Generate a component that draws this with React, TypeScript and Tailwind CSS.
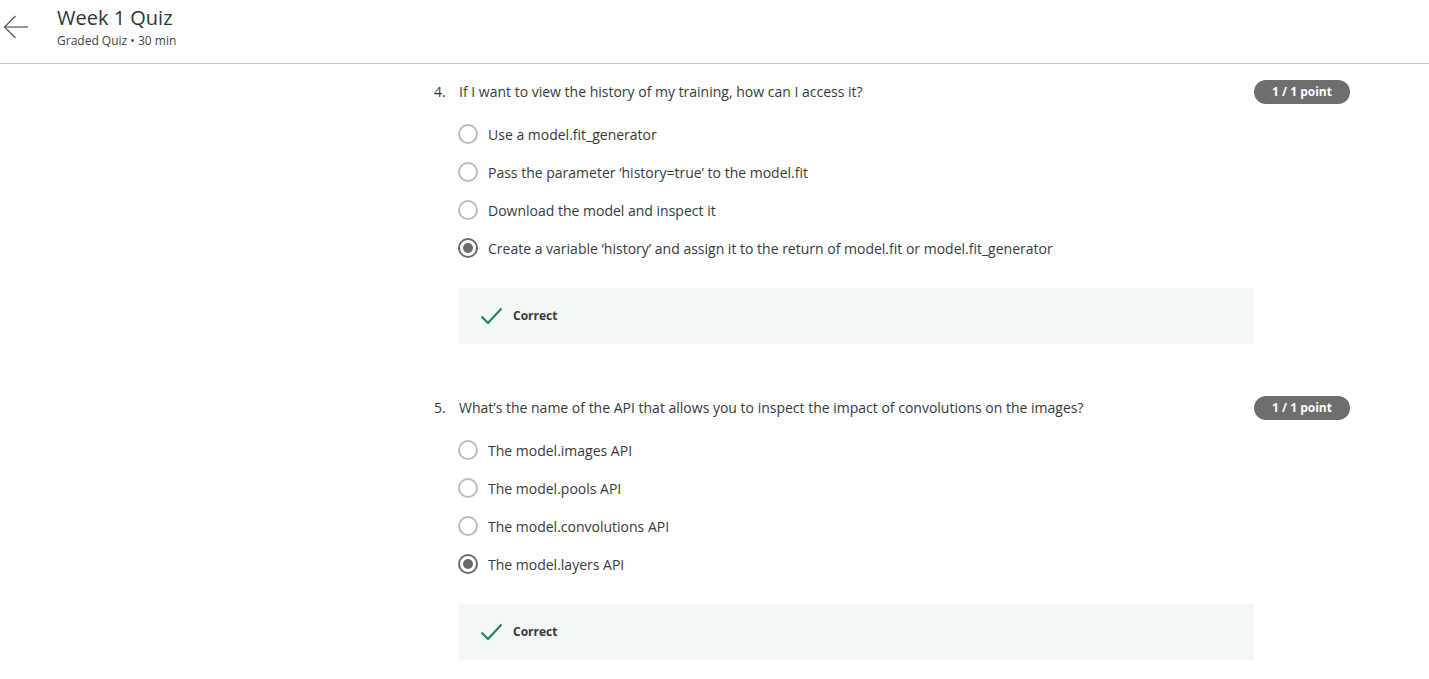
type Question = {
  num: number;
  text: string;
  options: string[];
  selected: number;
};

const questions: Question[] = [
  {
    num: 4,
    text: 'If I want to view the history of my training, how can I access it?',
    options: [
      'Use a model.fit_generator',
      'Pass the parameter \u2018history=true\u2019 to the model.fit',
      'Download the model and inspect it',
      'Create a variable \u2018history\u2019 and assign it to the return of model.fit or model.fit_generator',
    ],
    selected: 3,
  },
  {
    num: 5,
    text: 'What\u2019s the name of the API that allows you to inspect the impact of convolutions on the images?',
    options: [
      'The model.images API',
      'The model.pools API',
      'The model.convolutions API',
      'The model.layers API',
    ],
    selected: 3,
  },
];

function Radio({ checked }: { checked: boolean }) {
  return (
    <span
      className={`flex h-[20px] w-[20px] shrink-0 items-center justify-center rounded-full border-2 ${
        checked ? 'border-[#6b6b6b]' : 'border-[#bdbdbd]'
      }`}
    >
      {checked && <span className="h-[10px] w-[10px] rounded-full bg-[#6b6b6b]" />}
    </span>
  );
}

function QuestionBlock({ q }: { q: Question }) {
  return (
    <div className="flex">
      <div className="flex-1">
        <div className="flex h-[24px] items-center text-[14px] text-[#373a3c]">
          <span className="w-[25px]">{q.num}.</span>
          <span>{q.text}</span>
        </div>
        <div className="ml-[24px] mt-[12px] flex flex-col">
          {q.options.map((opt, i) => (
            <label key={opt} className="flex h-[38px] items-center gap-[10px] text-[14px] text-[#373a3c]">
              <Radio checked={i === q.selected} />
              <span>{opt}</span>
            </label>
          ))}
        </div>
        <div className="ml-[25px] mt-[21px] flex h-[56px] items-center bg-[#f3f8f6] pl-[21px]">
          <svg width="23" height="18" viewBox="0 0 23 18" fill="none">
            <path d="M1.5 9.5 L8 16 L21.5 1.5" stroke="#1f8354" strokeWidth="2" />
          </svg>
          <span className="ml-[10px] text-[12px] font-bold text-[#373a3c]">Correct</span>
        </div>
      </div>
      <div className="w-[96px] pt-[1px]">
        <span className="flex h-[24px] items-center justify-center rounded-full bg-[#6e6e6e] text-[12px] font-bold text-white">
          1 / 1 point
        </span>
      </div>
    </div>
  );
}

export default function App() {
  return (
    <div className="min-h-screen bg-white" style={{ fontFamily: '"Open Sans", "Liberation Sans", sans-serif' }}>
      <header className="flex h-[64px] items-start border-b border-[#c8c8c8]">
        <button className="ml-[3px] mt-[14px]">
          <svg width="26" height="26" viewBox="0 0 26 26" fill="none" stroke="#555" strokeWidth="1.2">
            <path d="M1.5 13 H25" />
            <path d="M12.5 2 L1.5 13 L12.5 24" />
          </svg>
        </button>
        <div className="ml-[28px] mt-[5px]">
          <h1 className="text-[20px] leading-[26px] text-[#333]">Week 1 Quiz</h1>
          <p className="mt-[2px] text-[12px] leading-[16px] text-[#444]">Graded Quiz &bull; 30 min</p>
        </div>
      </header>
      <main className="ml-[434px] w-[916px] pt-[15px]">
        <div className="flex flex-col gap-[51px]">
          {questions.map((q) => (
            <QuestionBlock key={q.num} q={q} />
          ))}
        </div>
      </main>
    </div>
  );
}
